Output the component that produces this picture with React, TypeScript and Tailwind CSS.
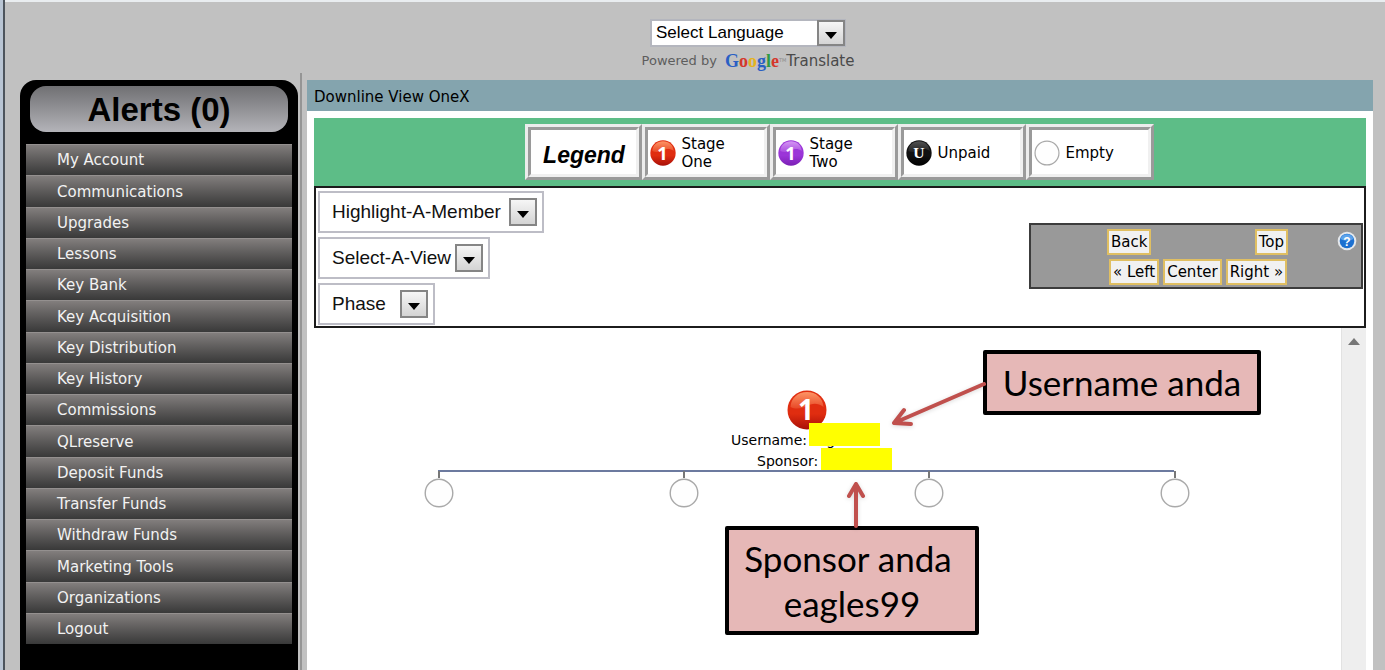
import React from "react";

const menu = [
  "My Account", "Communications", "Upgrades", "Lessons", "Key Bank", "Key Acquisition",
  "Key Distribution", "Key History", "Commissions", "QLreserve", "Deposit Funds",
  "Transfer Funds", "Withdraw Funds", "Marketing Tools", "Organizations", "Logout",
];

type BallKind = "red" | "purple" | "black";

const ballColors: Record<BallKind, [string, string, string]> = {
  red: ["#ff9a6a", "#e02d10", "#a80f08"],
  purple: ["#d79af5", "#9b35d8", "#7a1fb4"],
  black: ["#555555", "#111111", "#000000"],
};

function Ball({ kind, id, className }: { kind: BallKind; id: string; className: string }) {
  const [light, mid, dark] = ballColors[kind];
  return (
    <svg viewBox="0 0 40 40" className={className} aria-hidden="true">
      <defs>
        <linearGradient id={id} x1="0" y1="0" x2="0" y2="1">
          <stop offset="0" stopColor={mid} />
          <stop offset="0.6" stopColor={mid} />
          <stop offset="1" stopColor={dark} />
        </linearGradient>
        <linearGradient id={id + "-shine"} x1="0" y1="0" x2="0" y2="1">
          <stop offset="0" stopColor={light} stopOpacity="0.95" />
          <stop offset="1" stopColor={light} stopOpacity="0.25" />
        </linearGradient>
      </defs>
      <circle cx="20" cy="20" r="19.5" fill={`url(#${id})`} />
      <path d="M3.5 17C4 8 11 2 20 2s16 6 16.500 15C30 12 24 14 20 16S9 20 3.500 17Z" fill={`url(#${id}-shine)`} />
      {kind === "black" ? (
        <text x="20" y="28" textAnchor="middle" fill="#fff" fontSize="24" fontWeight="700" fontFamily="Liberation Serif, serif">U</text>
      ) : (
        <text x="19" y="30" textAnchor="middle" fill="#fff" fontSize="28" fontWeight="700" fontFamily="Open Sans, sans-serif">1</text>
      )}
    </svg>
  );
}

function EmptyCircle({ className }: { className: string }) {
  return (
    <svg viewBox="0 0 30 30" className={className} aria-hidden="true">
      <circle cx="15" cy="15" r="13.8" fill="#fefefe" stroke="#a9a9a9" strokeWidth="1.4" />
    </svg>
  );
}

function LegendCell({ children, className }: { children: React.ReactNode; className: string }) {
  return (
    <div className={`h-14 border-[3px] border-t-[#ececec] border-l-[#ececec] border-r-[#9a9a9a] border-b-[#9a9a9a] ${className}`}>
      <div className="flex h-full items-center gap-1.5 border-[3px] border-t-[#9a9a9a] border-l-[#9a9a9a] border-r-[#f0f0f0] border-b-[#f0f0f0] bg-white pt-0.5 pl-0.5 text-[15px] leading-[18px]">
        {children}
      </div>
    </div>
  );
}

function ArrowBox({ className }: { className: string }) {
  return (
    <span className={`pointer-events-none absolute flex items-center justify-center border-2 border-[#858585] bg-linear-to-b from-[#f6f6f6] to-[#d4d4d4] ${className}`}>
      <svg viewBox="0 0 12 7" className="mt-1 h-[7px] w-3" aria-hidden="true"><path d="M0 0h12L6 7Z" fill="#000" /></svg>
    </span>
  );
}

function Picker({ label, className }: { label: string; className: string }) {
  return (
    <div className={`relative h-[42px] ${className}`}>
      <select aria-label={label} className="h-full w-full appearance-none border-2 border-[#bdbdc6] bg-white pl-3 font-['Liberation_Sans',sans-serif] text-[19px] text-[#111111]">
        <option>{label}</option>
      </select>
      <ArrowBox className="top-[7px] right-[7px] h-7 w-7" />
    </div>
  );
}

function NavButton({ children }: { children: React.ReactNode }) {
  return (
    <button className="h-[26px] border-2 border-[#e0bf62] bg-[#f1f1f1] px-0.5 text-[15px] leading-5 whitespace-nowrap text-black">
      {children}
    </button>
  );
}

const nodes = [
  "left-[110px]", "left-[355px]", "left-[600px]", "left-[846px]",
];

export default function App() {
  return (
    <div className="flex min-h-screen overflow-hidden bg-[#c1c1c1] font-['DejaVu_Sans',Verdana,sans-serif] text-black">
      <div className="w-[5px] shrink-0 border-r-2 border-[#4d545c] bg-[#b9c5d4]" />
      <div className="flex min-w-0 grow flex-col">
        <header className="flex h-[73px] flex-col items-center border-t-2 border-[#e9edf0] pt-[17px] pl-[106px]">
          <div className="relative h-7 w-[196px]">
            <select aria-label="Select Language" className="h-full w-full appearance-none border-2 border-[#b4b6be] bg-white pl-1 font-['Liberation_Sans',sans-serif] text-[17px] leading-6">
              <option>Select Language</option>
            </select>
            <ArrowBox className="top-px right-px h-[26px] w-7" />
          </div>
          <p className="flex h-[30px] items-center gap-2 text-[13px] whitespace-nowrap text-[#5d5d5d]">
            Powered by
            <a href="#translate" className="flex items-center">
              <span className="font-['Liberation_Serif',serif] text-lg font-bold">
                <span className="text-[#2a5fc4]">G</span><span className="text-[#d4372c]">o</span><span className="text-[#e5b320]">o</span><span className="text-[#2a5fc4]">g</span><span className="text-[#2f9a45]">l</span><span className="text-[#d4372c]">e</span>
              </span>
              <span className="text-[5px] text-[#8a8a8a]">TM</span>
              <span className="text-[15px] text-[#4a4a4a]">Translate</span>
            </a>
          </p>
        </header>
        <div className="flex grow">
          <aside className="flex w-[297px] shrink-0 border-r-2 border-[#959595] pt-[7px] pr-0.5 pl-[15px]">
            <div className="grow rounded-t-2xl bg-black px-1.5 pt-1.5">
              <a href="#alerts" className="mx-1 flex h-[46px] items-center justify-center rounded-2xl bg-linear-to-b from-[#707073] to-[#b4b4b9] pt-0.5 font-['Liberation_Sans',sans-serif] text-[33px] font-bold">Alerts (0)</a>
              <nav className="mt-3 grid h-[500px] auto-rows-fr">
                {menu.map((m) => (
                  <a key={m} href="#menu" className="flex items-center border-t border-[#94908f] bg-linear-to-b from-[#827e7d] to-[#393939] pt-px pl-[31px] text-[15px] text-[#f2f2f2]">{m}</a>
                ))}
              </nav>
            </div>
          </aside>
          <main className="mt-[7px] mr-3 ml-[5px] flex min-w-0 grow flex-col bg-white">
            <h1 className="h-[31px] bg-[#84a4ae] pl-[7px] text-[15px] leading-[34px]">Downline View OneX</h1>
            <div className="mx-[7px] mt-[7px] flex h-[68px] justify-center bg-[#5dbd87] pt-1.5 pr-0.5">
              <LegendCell className="w-[117px]">
                <h2 className="w-full pt-1 text-center font-['Liberation_Sans',sans-serif] text-[23px] font-bold italic">Legend</h2>
              </LegendCell>
              <LegendCell className="w-32"><Ball kind="red" id="lr" className="h-[26px] w-[26px]" /><span>Stage<br />One</span></LegendCell>
              <LegendCell className="w-32"><Ball kind="purple" id="lp" className="h-[26px] w-[26px]" /><span>Stage<br />Two</span></LegendCell>
              <LegendCell className="w-32"><Ball kind="black" id="lb" className="h-[26px] w-[26px]" /><span>Unpaid</span></LegendCell>
              <LegendCell className="w-32"><EmptyCircle className="h-[26px] w-[26px]" /><span>Empty</span></LegendCell>
            </div>
            <section className="mx-[7px] flex h-[142px] items-start justify-between border-2 border-[#1c1c1c] pr-px pl-0.5">
              <div className="flex flex-col gap-1 pt-[3px]">
                <Picker label="Highlight-A-Member" className="w-[226px]" />
                <Picker label="Select-A-View" className="w-[172px]" />
                <Picker label="Phase" className="w-[117px]" />
              </div>
              <div className="relative mt-[35px] flex h-[66px] w-[334px] flex-col gap-1 border-2 border-[#3c3c3c] bg-[#999999] pt-1">
                <div className="flex justify-between pr-[73px] pl-[76px]">
                  <NavButton>Back</NavButton>
                  <NavButton>Top</NavButton>
                </div>
                <div className="flex gap-1 pl-[78px]">
                  <NavButton>« Left</NavButton>
                  <NavButton>Center</NavButton>
                  <NavButton>Right »</NavButton>
                </div>
                <button aria-label="Help" className="absolute top-1.5 right-1">
                  <svg viewBox="0 0 20 20" className="h-5 w-5" aria-hidden="true">
                    <circle cx="10" cy="10" r="9.300" fill="#e4e8ec" />
                    <circle cx="10" cy="10" r="7.300" fill="#1c70d0" />
                    <path d="M3.500 8a6.800 6.800 0 0 1 13 0c-4 2-9 2-13 0Z" fill="#5ba3ec" />
                    <text x="10" y="14.500" textAnchor="middle" fill="#fff" fontSize="12" fontWeight="700" fontFamily="Liberation Sans, sans-serif">?</text>
                  </svg>
                </button>
              </div>
            </section>
            <section className="mx-[7px] flex grow">
              <div className="relative grow">
                <Ball kind="red" id="root-ball" className="absolute top-[62px] left-[473px] h-10 w-10" />
                <span className="absolute top-[103px] left-[417px] flex gap-0.5 text-sm leading-[18px] whitespace-nowrap"><span>Username:</span><span>eagles</span></span>
                <span className="absolute top-[124px] left-[443px] text-sm leading-[18px]">Sponsor:</span>
                <span className="absolute top-[95px] left-[495px] h-[23px] w-[71px] bg-[#ffff00]" />
                <span className="absolute top-[120px] left-[507px] h-[23px] w-[71px] bg-[#ffff00]" />
                <div className="absolute top-[142px] left-[124px] h-0.5 w-[736px] bg-[#6c7a9f]" />
                {nodes.map((n) => (
                  <div key={n} className={`absolute top-[143px] flex flex-col items-center ${n}`}>
                    <span className="h-[7px] w-0.5 bg-[#777777]" />
                    <EmptyCircle className="h-[30px] w-[30px]" />
                  </div>
                ))}
                <div className="absolute top-[22px] left-[669px] flex h-[65px] w-[278px] items-center justify-center rounded-xs border-4 border-black bg-[#e6b8b7] font-['Lato',sans-serif] text-[35px] whitespace-nowrap">Username anda</div>
                <div className="absolute top-[198px] left-[411px] flex h-[109px] w-[254px] flex-col items-center justify-center rounded-xs border-4 border-black bg-[#e6b8b7] font-['Lato',sans-serif] text-[35px] leading-[45px] whitespace-nowrap">
                  <span className="pr-2">Sponsor anda</span><span>eagles99</span>
                </div>
                <svg viewBox="0 0 130 160" className="absolute top-[42px] left-[536px] h-[160px] w-[130px] overflow-visible drop-shadow-sm" fill="none" stroke="#c0504d" strokeWidth="4" strokeLinecap="round" strokeLinejoin="round" aria-hidden="true">
                  <path d="M134 14 44 53M54 40 44 53l17 1" />
                  <path d="M6 156v-42M-1 126l7-12 7 12" />
                </svg>
              </div>
              <div className="w-[25px] shrink-0 border-l border-[#e2e2e2] bg-[#eeeeee]">
                <svg viewBox="0 0 12 7" className="mx-auto mt-2.5 h-[7px] w-3" aria-hidden="true"><path d="M6 0l6 7H0Z" fill="#777" /></svg>
              </div>
            </section>
          </main>
        </div>
      </div>
    </div>
  );
}
